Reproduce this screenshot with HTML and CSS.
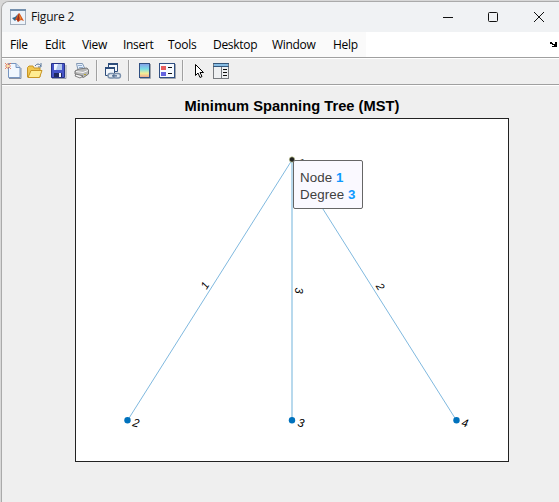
FILE: index.html
```
<!DOCTYPE html>
<html lang="en">
<head>
<meta charset="utf-8">
<title>Figure 2</title>
<link rel="stylesheet" href="styles.css">
</head>
<body>
<div class="desktop">
<main class="window">
  <header class="titlebar">
    <svg class="app-icon" width="16" height="16" viewBox="0 0 16 16">
      <rect x=".5" y=".5" width="15" height="15" fill="#edf3fa" stroke="#a3afbd"/>
      <path d="M0 1h16" stroke="#7590ad" stroke-width="2"/>
      <path d="M2 9l3-1 3-3-1 5-2 2z" fill="#31668d"/>
      <path d="M5 11l2-4 2-3 1 1 4 7-3-1-3 2-1-2z" fill="#d85a20"/>
      <path d="M9 4l1 5-2 4-1-2z" fill="#992d1d"/>
      <path d="M9 5l2 4-1 2z" fill="#f3a13b"/>
    </svg>
    <h1 class="caption">Figure 2</h1>
    <svg class="controls" width="104" height="14" viewBox="0 0 104 14" fill="none" stroke="#111">
      <path d="M0 7.500h10"/>
      <rect x="45.500" y="2.500" width="9" height="9" rx="1"/>
      <path d="M91 2l10 10M101 2L91 12"/>
    </svg>
  </header>

  <nav class="menubar">
    <div class="menus">
      <span class="menu file">File</span><span class="menu edit">Edit</span><span class="menu view">View</span><span class="menu insert">Insert</span><span class="menu tools">Tools</span><span class="menu desk">Desktop</span><span class="menu win">Window</span><span class="menu help">Help</span>
    </div>
    <svg class="dock" width="8" height="6" viewBox="0 0 8 6" shape-rendering="crispEdges"><path d="M0 0h2v1h1v1h2V0h2v5H2V4h2V3H2V2H0z"/></svg>
  </nav>

  <div class="toolbar">
    <svg class="tool new" width="17" height="18" viewBox="0 0 17 18">
      <path d="M4 16.500h12V6" fill="none" stroke="#8792a5"/>
      <path d="M3.500 1.500h7.500l4 4v10H3.500z" fill="#f0f7ff" stroke="#7795c0"/>
      <path d="M11 1.500v4h4" fill="#cbdcf2" stroke="#7795c0"/>
      <path d="M0 1l6 6M6 1L0 7M3 1v6M0 4h6" stroke="#e36b42" stroke-width=".8"/>
      <rect x="2" y="3" width="2" height="2" fill="#ffe29a"/>
    </svg>
    <svg class="tool open" width="17" height="18" viewBox="0 0 17 18">
      <path d="M8 4q3-4 6 0M14 1v4h-3" fill="none" stroke="#597799"/>
      <path d="M.5 15V5.500L2 4h4l1 2h6v9z" fill="#f1c64f" stroke="#c89524"/>
      <path d="M1 15.500L4 8.500h11L12.500 15.500z" fill="#ffec91" stroke="#c89524"/>
    </svg>
    <svg class="tool save" width="16" height="18" viewBox="0 0 16 18">
      <path d="M1 16.500h14V3" fill="none" stroke="#969baa"/>
      <path d="M.5 1.500h13v14H.5z" fill="#4654c8" stroke="#263288"/>
      <rect x="3" y="2" width="8" height="6" fill="#eef5ff"/>
      <path d="M7 2h4v6H5z" fill="#b4c9ed"/>
      <rect x="3" y="11" width="8" height="4" fill="#20295f"/>
      <rect x="8" y="11" width="2" height="4" fill="#f1f2fb"/>
    </svg>
    <svg class="tool print" width="16" height="18" viewBox="0 0 16 18">
      <path d="M4 8L2.500 1.500h6L11 7z" fill="#e5f0fc" stroke="#8298b4"/>
      <path d="M4 3.500h4M5 5.500h4" stroke="#93add0"/>
      <path d="M1 9l4-2 8-1 1.500 2v4l-5 3.500L1 12z" fill="#b8b8b8" stroke="#777"/>
      <path d="M2 9.500l7 1 5-2" fill="none" stroke="#f7f7f7"/>
      <path d="M2 12l7 2-3 2-5-2z" fill="#f3f3f3" stroke="#555" stroke-width=".7"/>
      <path d="M10 12.500h2" stroke="#b7a52d"/>
    </svg>
    <i class="divider d1"></i>
    <svg class="tool link" width="17" height="18" viewBox="0 0 17 18">
      <path d="M3.500 1.500h9v8h-9z" fill="#f3f7fc" stroke="#2c4c7b"/><path d="M3 2h10" stroke="#2c4c7b" stroke-width="2"/>
      <path d="M.5 5.500h9v8h-9z" fill="#f3f7fc" stroke="#2c4c7b"/><path d="M0 6h10" stroke="#2c4c7b" stroke-width="2"/>
      <g fill="#dfe7f0" stroke="#7a90ac" stroke-width="1.400"><rect x="3" y="11.500" width="7" height="4.500" rx="2.200"/><rect x="8.500" y="11.500" width="7" height="4.500" rx="2.200"/></g>
      <path d="M7 13.800h5" stroke="#49648b" stroke-width="1.200"/>
    </svg>
    <i class="divider d2"></i>
    <svg class="tool colorbar" width="12" height="18" viewBox="0 0 12 18">
      <defs><linearGradient id="spectrum" x2="0" y2="1"><stop stop-color="#869de9"/><stop offset=".4" stop-color="#79dfe7"/><stop offset=".7" stop-color="#f2ed96"/><stop offset="1" stop-color="#efa08e"/></linearGradient></defs>
      <path d="M1 16.500h10.500V2" fill="none" stroke="#a0a5ad"/>
      <rect x=".5" y="1.500" width="10" height="14" fill="url(#spectrum)" stroke="#304f82"/>
    </svg>
    <svg class="tool legend" width="17" height="18" viewBox="0 0 17 18">
      <path d="M1 16.500h15.500V2" fill="none" stroke="#a0a5ad"/>
      <rect x=".5" y="1.500" width="15" height="14" fill="#f6faff" stroke="#304f82"/>
      <rect x="2" y="4" width="5" height="4" fill="#e65d5d"/><rect x="2" y="10" width="5" height="4" fill="#6262df"/>
      <path d="M9 5.500h4M9 11.500h4" stroke="#111"/>
    </svg>
    <i class="divider d3"></i>
    <svg class="tool pointer" width="10" height="18" viewBox="0 0 10 18">
      <path d="M.5 2.500v11l2.500-2.500 2 4.500 2-1-2-4h3.500z" fill="#fff" stroke="#000"/>
    </svg>
    <svg class="tool inspector" width="16" height="18" viewBox="0 0 16 18">
      <rect x=".5" y="1.500" width="15" height="15" fill="#eef0f2" stroke="#777b80"/>
      <path d="M0 1.500h16M0 4.500h16" stroke="#35587c"/><path d="M1 3h14" stroke="#86bce4" stroke-width="2"/>
      <path d="M8.500 5v11" stroke="#777b80"/>
      <path d="M10 7.500h4M10 10.500h4M10 13.500h4" stroke="#111"/>
    </svg>
  </div>

  <section class="figure">
    <h2 class="plot-title">Minimum Spanning Tree (MST)</h2>
    <div class="axes">
      <svg class="graph" width="432" height="342" viewBox="76 119 432 342">
        <g class="edges">
          <path d="M292 160L127.500 420.500M292 160L456.500 420.500"/>
          <path class="upright" d="M292 160V420"/>
        </g>
        <g class="nodes"><circle cx="127.500" cy="420.300" r="3.200"/><circle cx="292" cy="420.300" r="3.200"/><circle cx="456.500" cy="420.300" r="3.200"/></g>
        <g class="labels">
          <text transform="translate(132 426) rotate(13)">2</text>
          <text transform="translate(297 426) rotate(13)">3</text>
          <text transform="translate(461 426) rotate(13)">4</text>
          <text transform="translate(297 166) rotate(13)">1</text>
          <text class="weight" transform="translate(206.500 290) rotate(-58)">1</text>
          <text class="weight" transform="translate(295 287.500) rotate(90)">3</text>
          <text class="weight" transform="translate(375.500 286) rotate(58)">2</text>
        </g>
        <circle class="selected" cx="292" cy="159.500" r="2.700"/>
      </svg>
      <div class="datatip">
        <div>Node <b>1</b></div>
        <div>Degree <b>3</b></div>
      </div>
    </div>
  </section>
</main>
</div>
</body>
</html>
```
FILE: styles.css
```
* { box-sizing: border-box; }
body { margin: 0; background: #cfcfcf; overflow: hidden; }
.desktop { width: 559px; height: 502px; padding: 1px 0 0 1px; background: #d8d8d8; }
.window {
  height: 501px;
  display: flex;
  flex-direction: column;
  border-left: 1px solid #aaa;
  border-top: 1px solid #aaa;
  border-top-left-radius: 8px;
  background: #efefef;
  overflow: hidden;
}
.titlebar {
  height: 30px;
  flex: none;
  display: flex;
  align-items: center;
  padding: 0 12px 0 8px;
  background: #f0f2f4;
}
.caption {
  margin: 0 0 0 5px;
  flex: 1;
  font: 12px/16px "Open Sans", sans-serif;
  letter-spacing: -.2px;
  color: #111;
}
.controls { flex: none; }
.menubar {
  height: 25px;
  flex: none;
  display: flex;
  align-items: center;
  justify-content: space-between;
  background: #fff;
}
.menus {
  width: 364px;
  height: 25px;
  display: flex;
  align-items: center;
  padding-left: 8px;
  background: #fafafa;
  font: 12px/25px "Open Sans", sans-serif;
  letter-spacing: -.3px;
  color: #000;
}
.menu { flex: none; white-space: nowrap; }
.file { width: 35px; }
.edit { width: 37px; }
.view { width: 41px; }
.insert { width: 45px; }
.tools { width: 45px; }
.desk { width: 59px; }
.win { width: 61px; }
.dock { margin-right: 1px; }
.toolbar {
  height: 29px;
  flex: none;
  display: flex;
  align-items: center;
  padding: 0 0 2px 3px;
  border-top: 1px solid #a0a0a0;
  border-bottom: 1px solid #fff;
  box-shadow: inset 0 1px #fff, inset 0 -1px #a0a0a0;
}
.tool { flex: none; }
.open { margin-left: 5px; }
.save { margin-left: 7px; }
.print { margin-left: 7px; }
.divider { width: 2px; height: 21px; background: #a0a0a0; border-right: 1px solid #f7f7f7; }
.d1 { margin-left: 6px; }
.link { margin-left: 7px; }
.d2 { margin-left: 6px; }
.colorbar { margin-left: 9px; }
.legend { margin-left: 8px; }
.d3 { margin-left: 6px; }
.pointer { margin-left: 11px; }
.inspector { margin-left: 8px; }
.figure {
  flex: 1;
  padding: 11px 50px 40px 73px;
}
.plot-title {
  margin: 0;
  height: 21px;
  text-align: center;
  font: bold 14.67px/19px "Liberation Sans", sans-serif;
  letter-spacing: .03px;
  color: #000;
}
.axes {
  position: relative;
  width: 434px;
  height: 344px;
  border: 1px solid #222;
  background: #fff;
}
.graph { display: block; }
.edges { fill: none; stroke: #80b9df; stroke-width: 1; }
.upright { stroke: #b8d9ed; stroke-width: 2; }
.nodes { fill: #0072bd; }
.selected { fill: #222; stroke: #d9e0a0; stroke-width: .6; }
.labels { font: italic 11.5px "Liberation Sans", sans-serif; fill: #000; }
.weight { font-size: 11px; }
.datatip {
  position: absolute;
  left: 217px;
  top: 41px;
  width: 70px;
  height: 49px;
  padding: 8px 0 0 6px;
  border: 1px solid #666;
  border-radius: 2px;
  background: #faf9ff;
  font: 13.33px/17px "Liberation Sans", sans-serif;
  letter-spacing: .08px;
  color: #404040;
  white-space: nowrap;
}
.datatip b { color: #0d99ff; }
```
